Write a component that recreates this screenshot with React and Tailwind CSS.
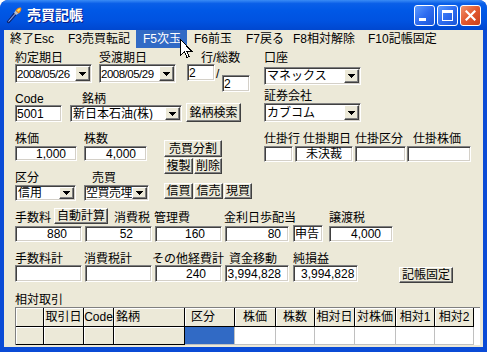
import React from "react";

const sunken =
  "border border-t-[#808080] border-l-[#808080] border-b-white border-r-white shadow-[inset_1px_1px_0_#404040,inset_-1px_-1px_0_#d4d0c8]";
const raised =
  "border border-t-white border-l-white border-b-[#404040] border-r-[#404040] shadow-[inset_-1px_-1px_0_#808080]";

function Box({ className = "", children }) {
  return (
    <div className={`${sunken} bg-white flex items-center whitespace-nowrap leading-[12px] ${className}`}>
      {children}
    </div>
  );
}

function Btn({ className = "", children }) {
  return (
    <div className={`${raised} bg-[#ECE9D8] flex items-center justify-center whitespace-nowrap leading-[12px] ${className}`}>
      {children}
    </div>
  );
}

function Arrow() {
  return (
    <svg width="7" height="4" viewBox="0 0 7 4" shapeRendering="crispEdges">
      <path d="M0 0h7v1h-1v1h-1v1h-1v1h-1v-1h-1v-1h-1v-1h-1z" fill="#000" />
    </svg>
  );
}

function Combo({ className = "", text, textClass = "pl-[1px]" }) {
  return (
    <div className={`${sunken} bg-white flex p-[1px] ${className}`}>
      <div className={`flex-1 flex items-center whitespace-nowrap overflow-hidden leading-[12px] ${textClass}`}>{text}</div>
      <div className={`${raised} bg-[#ECE9D8] w-[15px] shrink-0 flex items-center justify-center`}>
        <Arrow />
      </div>
    </div>
  );
}

function L({ className = "", children }) {
  return <span className={`block h-[12px] leading-[12px] whitespace-nowrap ${className}`}>{children}</span>;
}

function TitleBar() {
  return (
    <div className="h-[30px] shrink-0 flex items-center rounded-t-[8px] bg-[linear-gradient(180deg,#3A8CF5_0%,#0A5FE8_12%,#0058E6_35%,#0052E0_70%,#0047CF_100%)] pl-[5px] pr-[6px]">
      <svg width="18" height="18" viewBox="0 0 18 18" className="shrink-0">
        <path d="M2 16 L4 17 L11 9 L9 7 Z" fill="#2B3F8F" stroke="#0B1B55" strokeWidth="0.8" />
        <path d="M3.5 15.5 L10 8.2" stroke="#8FB2FF" strokeWidth="1" />
        <path d="M9 7 L11 9 L13.5 7.5 L10.5 4.5 Z" fill="#C0C0C0" />
        <path d="M10.5 4.5 L13.5 7.5 C16 6 17 3 16 1.5 C14 1 12 2 10.5 4.5 Z" fill="#F08A1C" />
        <path d="M12 4.5 L13.2 5.8 C15 4.8 15.5 3 15 2.5 C14 2.4 12.8 3.2 12 4.5 Z" fill="#FFE15A" />
      </svg>
      <span className="ml-[4px] text-[14px] font-bold text-white leading-[14px] [text-shadow:1px_1px_0_#0A1E8C]">
        売買記帳
      </span>
      <div className="ml-auto flex gap-[2px] mt-[1px]">
        <div className="w-[21px] h-[21px] rounded-[3px] border border-white bg-[linear-gradient(135deg,#5C9BFF_0%,#2E6CF0_50%,#1A55D8_100%)] relative">
          <div className="absolute left-[4px] top-[12px] w-[7px] h-[3px] bg-white" />
        </div>
        <div className="w-[21px] h-[21px] rounded-[3px] border border-white bg-[linear-gradient(135deg,#5C9BFF_0%,#2E6CF0_50%,#1A55D8_100%)] flex items-center justify-center">
          <div className="w-[11px] h-[11px] border border-white border-t-[3px]" />
        </div>
        <div className="w-[21px] h-[21px] rounded-[3px] border border-white bg-[linear-gradient(135deg,#F0936E_0%,#E2582E_50%,#C8401C_100%)] flex items-center justify-center">
          <svg width="11" height="11" viewBox="0 0 11 11">
            <path d="M1.5 1.5 L9.5 9.5 M9.5 1.5 L1.5 9.5" stroke="#fff" strokeWidth="2.2" strokeLinecap="square" />
          </svg>
        </div>
      </div>
    </div>
  );
}

function Menu() {
  const items = [
    ["終了Esc", "w-[57px] pl-[6px]", false],
    ["F3売買転記", "w-[75px] pl-[7px]", false],
    ["F5次玉", "w-[51px] pl-[7px]", true],
    ["F6前玉", "w-[52px] pl-[7px]", false],
    ["F7戻る", "w-[47px] pl-[7px]", false],
    ["F8相対解除", "w-[75px] pl-[7px]", false],
    ["F10記帳固定", "w-[80px] pl-[7px]", false],
  ];
  return (
    <div className="h-[18px] shrink-0 flex">
      {items.map(([t, cls, hi]) => (
        <div
          key={t}
          className={`${cls} h-[18px] flex items-center whitespace-nowrap leading-[12px] ${hi ? "bg-[#316AC5] text-white" : ""}`}
        >
          {t}
        </div>
      ))}
    </div>
  );
}

const cols = [
  ["", "w-[28px]", "center"],
  ["取引日", "w-[40px]", "center"],
  ["Code", "w-[30px]", "center"],
  ["銘柄", "w-[71px]", "left"],
  ["区分", "w-[50px]", "left6"],
  ["株価", "w-[41px]", "center"],
  ["株数", "w-[39px]", "center"],
  ["相対日", "w-[40px]", "center"],
  ["対株価", "w-[41px]", "center"],
  ["相対1", "w-[39px]", "center"],
  ["相対2", "w-[39px]", "center"],
];

function Grid() {
  const fixedCell =
    "bg-[#ECE9D8] border-r border-b border-r-black border-b-black shadow-[inset_1px_1px_0_#ffffff]";
  return (
    <div className="mt-[1px] w-[465px] h-[38px] bg-white flex flex-col border-t border-l border-t-[#808080] border-l-[#808080]">
      <div className="flex h-[19px]">
        {cols.map(([t, w, a], i) => (
          <div
            key={i}
            className={`${w} ${fixedCell} h-[19px] flex items-center leading-[12px] whitespace-nowrap ${
              a === "center" ? "justify-center" : a === "left" ? "pl-[2px]" : "pl-[6px]"
            }`}
          >
            {t}
          </div>
        ))}
        <div className="flex-1 bg-white" />
      </div>
      <div className="flex h-[18px]">
        {cols.map(([t, w], i) => (
          <div
            key={i}
            className={`${w} h-[18px] ${
              i < 4
                ? fixedCell
                : i === 4
                ? "bg-[#316AC5] border-r border-b border-r-[#C0C0C0] border-b-[#C0C0C0]"
                : "bg-white border-r border-b border-r-[#C0C0C0] border-b-[#C0C0C0]"
            }`}
          />
        ))}
        <div className="flex-1 bg-white" />
      </div>
    </div>
  );
}

function Cursor() {
  return (
    <svg
      width="13"
      height="21"
      viewBox="0 0 13 21"
      className="absolute left-[180px] top-[39px]"
      shapeRendering="crispEdges"
    >
      <path d="M0.5 0.5 L0.5 16.5 L4.5 12.5 L7 18.5 L9.2 17.5 L6.8 12 L11.5 12 Z" fill="#fff" stroke="#000" strokeWidth="1" />
    </svg>
  );
}

export default function App() {
  return (
    <div className="w-[487px] h-[352px] relative bg-[#0A4BD6] rounded-t-[8px] flex flex-col overflow-hidden text-[12px] text-black font-['Liberation_Sans','Noto_Sans_CJK_JP',sans-serif]">
      <TitleBar />
      <div className="flex-1 mx-[4px] mb-[5px] bg-[#ECE9D8] flex flex-col">
        <Menu />
        <div className="flex flex-col pl-[11px] pt-[4px]">
          {/* Top section */}
          <div className="flex items-start">
            <div className="w-[235px] flex flex-col">
              <div className="flex items-start h-[40px]">
                <div className="flex flex-col w-[77px]">
                  <L>約定期日</L>
                  <Combo className="w-[77px] h-[19px]" text="2008/05/26" textClass="tracking-[-0.5px] text-[11.5px]" />
                </div>
                <div className="flex flex-col w-[77px] ml-[7px]">
                  <L>受渡期日</L>
                  <Combo className="w-[77px] h-[19px]" text="2008/05/29" textClass="tracking-[-0.5px] text-[11.5px]" />
                </div>
                <div className="flex flex-col w-[63px] ml-[11px]">
                  <L className="pl-[14px]">行/総数</L>
                  <div className="flex items-start">
                    <Box className="w-[28px] h-[17px] pl-[1px]">2</Box>
                    <span className="w-[7px] mt-[4px] leading-[12px] pl-[1px]">/</span>
                    <Box className="w-[28px] h-[17px] mt-[11px] pl-[1px]">2</Box>
                  </div>
                </div>
              </div>
              <div className="flex mt-[1px]">
                <L className="w-[67px]">Code</L>
                <L>銘柄</L>
              </div>
              <div className="flex items-end -mt-[2px] h-[19px]">
                <Box className="w-[47px] h-[17px] pl-[1px]">5001</Box>
                <Combo className="ml-[8px] w-[112px] h-[17px]" text="新日本石油(株)" />
                <Btn className="ml-[4px] w-[55px] h-[19px]">銘柄検索</Btn>
              </div>
            </div>
            <div className="ml-[14px] w-[97px] flex flex-col">
              <L>口座</L>
              <Combo className="mt-[3px] w-[97px] h-[18px]" text="マネックス" />
              <L className="mt-[5px]">証券会社</L>
              <Combo className="mt-[1px] w-[97px] h-[19px]" text="カブコム" />
            </div>
          </div>

          {/* Row C */}
          <div className="flex items-start mt-[11px]">
            <div className="flex flex-col w-[134px]">
              <div className="flex h-[13px]">
                <L className="w-[69px]">株価</L>
                <L>株数</L>
              </div>
              <div className="flex">
                <Box className="w-[62px] h-[15px] justify-end pr-[10px]">1,000</Box>
                <Box className="ml-[7px] w-[63px] h-[15px] justify-end pr-[10px]">4,000</Box>
              </div>
              <div className="flex mt-[11px] h-[13px]">
                <L className="w-[77px]">区分</L>
                <L>売買</L>
              </div>
              <div className="flex">
                <Combo className="w-[61px] h-[16px]" text="信用" />
                <Combo className="ml-[8px] w-[65px] h-[16px]" text="空買売埋" textClass="tracking-[-0.5px]" />
              </div>
            </div>
            <div className="ml-[15px] w-[88px] flex flex-col pt-[7px]">
              <Btn className="w-[58px] h-[17px]">売買分割</Btn>
              <div className="flex mt-[1px]">
                <Btn className="w-[29px] h-[16px]">複製</Btn>
                <Btn className="ml-[1px] w-[28px] h-[16px]">削除</Btn>
              </div>
              <div className="flex mt-[9px]">
                <Btn className="w-[29px] h-[16px]">信買</Btn>
                <Btn className="ml-[1px] w-[29px] h-[16px]">信売</Btn>
                <Btn className="ml-[1px] w-[28px] h-[16px]">現買</Btn>
              </div>
            </div>
            <div className="ml-[12px] flex flex-col">
              <div className="flex h-[13px]">
                <L className="w-[39px]">仕掛行</L>
                <L className="w-[52px]">仕掛期日</L>
                <L className="w-[58px]">仕掛区分</L>
                <L>仕掛株価</L>
              </div>
              <div className="flex">
                <Box className="w-[29px] h-[16px]" />
                <Box className="ml-[2px] w-[58px] h-[16px] justify-center">未決裁</Box>
                <Box className="ml-[2px] w-[51px] h-[16px]" />
                <Box className="ml-[1px] w-[64px] h-[16px]" />
              </div>
            </div>
          </div>

          {/* Row D */}
          <div className="flex items-end mt-[7px]">
            <L className="w-[39px]">手数料</L>
            <Btn className="w-[54px] h-[16px]">自動計算</Btn>
            <L className="ml-[6px] w-[40px]">消費税</L>
            <L className="w-[70px]">管理費</L>
            <L className="w-[105px]">金利日歩配当</L>
            <L>譲渡税</L>
          </div>
          <div className="flex mt-[2px]">
            <Box className="w-[67px] h-[16px] justify-end pr-[14px]">880</Box>
            <Box className="ml-[3px] w-[67px] h-[16px] justify-end pr-[18px]">52</Box>
            <Box className="ml-[3px] w-[67px] h-[16px] justify-end pr-[16px]">160</Box>
            <Box className="ml-[3px] w-[64px] h-[16px] justify-end pr-[7px]">80</Box>
            <Box className="ml-[4px] w-[30px] h-[17px] -mt-[1px] pl-[1px]">申告</Box>
            <Box className="ml-[6px] w-[64px] h-[16px] justify-end pr-[11px]">4,000</Box>
          </div>

          {/* Row E */}
          <div className="flex mt-[11px]">
            <L className="w-[69px]">手数料計</L>
            <L className="w-[68px]">消費税計</L>
            <L className="w-[77px]">その他経費計</L>
            <L className="w-[64px]">資金移動</L>
            <L>純損益</L>
          </div>
          <div className="flex items-start">
            <Box className="w-[67px] h-[17px]" />
            <Box className="ml-[3px] w-[67px] h-[17px]" />
            <Box className="ml-[3px] w-[67px] h-[17px] justify-end pr-[15px]">240</Box>
            <Box className="ml-[3px] w-[64px] h-[17px] justify-end pr-[7px]">3,994,828</Box>
            <Box className="ml-[4px] w-[65px] h-[17px] pl-[7px]">3,994,828</Box>
            <Btn className="ml-[41px] mt-[2px] w-[54px] h-[16px]">記帳固定</Btn>
          </div>

          {/* Row F */}
          <L className="mt-[11px]">相対取引</L>
          <Grid />
        </div>
      </div>
      <Cursor />
    </div>
  );
}
